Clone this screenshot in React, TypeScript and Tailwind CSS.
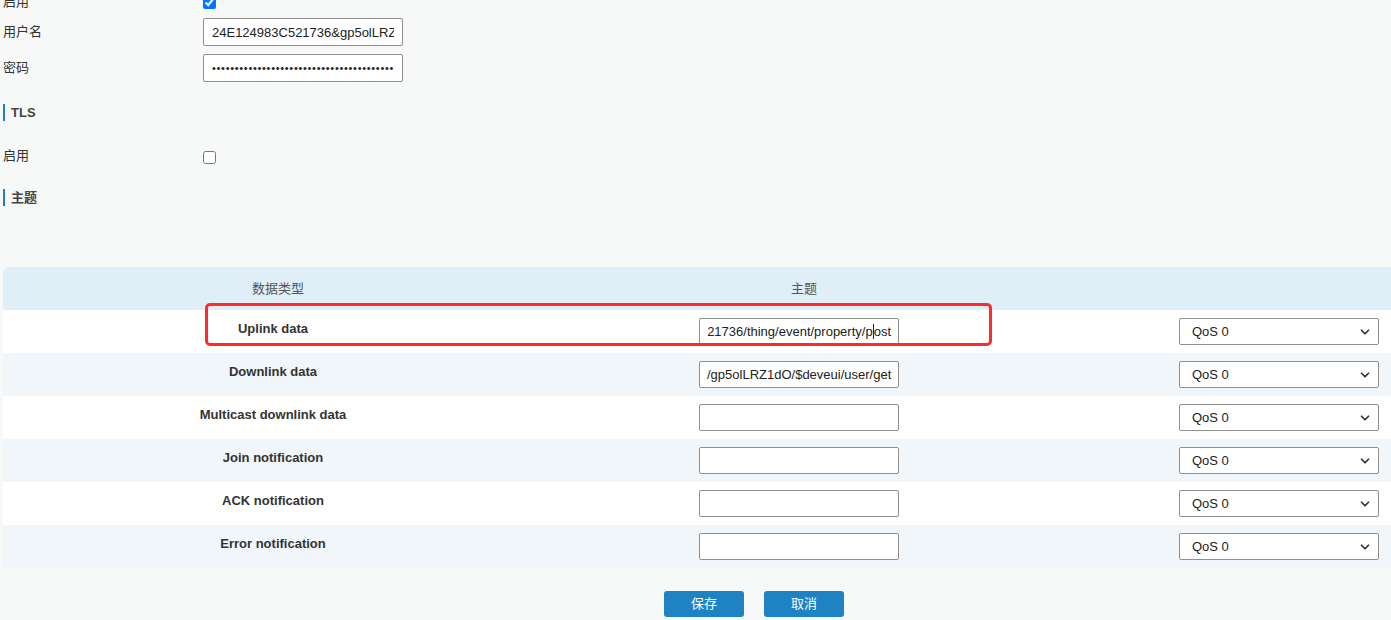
import { ChevronDown } from "lucide-react";

const FONT = "font-['Liberation_Sans','Noto_Sans_CJK_SC',sans-serif]";

interface TopicRow {
  label: string;
  topic: string;
  alignEnd?: boolean;
}

const rows: TopicRow[] = [
  { label: "Uplink data", topic: "21736/thing/event/property/post", alignEnd: true },
  { label: "Downlink data", topic: "/gp5olLRZ1dO/$deveui/user/get" },
  { label: "Multicast downlink data", topic: "" },
  { label: "Join notification", topic: "" },
  { label: "ACK notification", topic: "" },
  { label: "Error notification", topic: "" },
];

function SectionTitle({ text }: { text: string }) {
  return (
    <div className="flex h-[17px] items-center">
      <div className="h-[17px] w-[2px] bg-[#1f7fc0]" />
      <span className="ml-[6px] text-[13px] font-bold text-[#444]">{text}</span>
    </div>
  );
}

function TopicInput({ value, alignEnd }: { value: string; alignEnd?: boolean }) {
  return (
    <div
      className={[
        "flex h-[27px] w-[200px] items-center overflow-hidden whitespace-nowrap rounded-[2px] border border-[#8f8f8f] bg-white px-[7px] text-[13px] text-[#222]",
        alignEnd ? "justify-end" : "justify-start",
      ].join(" ")}
    >
      {alignEnd ? (
        <span className="shrink-0">
          21736/thing/event/property/p<span className="border-l border-[#222]">o</span>st
        </span>
      ) : (
        <span className="shrink-0">{value}</span>
      )}
    </div>
  );
}

function QosSelect() {
  return (
    <div className="flex h-[27px] w-[200px] items-center justify-between rounded-[2px] border border-[#8f8f8f] bg-white pl-[12px] pr-[6px] text-[13px] text-[#222]">
      <span>QoS 0</span>
      <ChevronDown className="h-[14px] w-[14px] text-[#333]" strokeWidth={3} />
    </div>
  );
}

export default function App() {
  return (
    <div className={`h-[620px] w-[1391px] overflow-hidden bg-[#f7f8f8] ${FONT}`}>
      {/* basic auth */}
      <div className="mt-[-12px] flex h-[28px] items-center pl-[3px]">
        <span className="w-[200px] text-[13px] text-[#333]">启用</span>
        <input type="checkbox" checked readOnly className="m-0 h-[13px] w-[13px]" />
      </div>
      <div className="mt-[2px] flex h-[28px] items-center pl-[3px]">
        <span className="w-[200px] text-[13px] text-[#333]">用户名</span>
        <input
          readOnly
          value="24E124983C521736&gp5olLRZ1dO"
          className="h-[28px] w-[200px] rounded-[2px] border border-[#8f8f8f] bg-white px-[8px] text-[13px] text-[#222] outline-none"
        />
      </div>
      <div className="mt-[8px] flex h-[28px] items-center pl-[3px]">
        <span className="w-[200px] text-[13px] text-[#333]">密码</span>
        <input
          readOnly
          type="password"
          value="abcdefghijklmnopqrstuvwxyzabcdefghijklmnopqrst"
          className="h-[28px] w-[200px] rounded-[2px] border border-[#8f8f8f] bg-white px-[8px] text-[11px] tracking-[0.7px] text-[#222] outline-none"
        />
      </div>

      {/* TLS */}
      <div className="mt-[22px] pl-[3px]">
        <SectionTitle text="TLS" />
      </div>
      <div className="mt-[22px] flex h-[28px] items-center pl-[3px]">
        <span className="w-[200px] pb-[3px] text-[13px] text-[#333]">启用</span>
        <input type="checkbox" readOnly className="m-0 h-[13px] w-[13px]" />
      </div>

      {/* topics */}
      <div className="mt-[18px] pl-[3px]">
        <SectionTitle text="主题" />
      </div>

      <div className="relative ml-[3px] mt-[61px] w-[1388px]">
        <div className="flex h-[43px] items-center rounded-tl-[6px] bg-[#e0eef8] text-[13px] text-[#555]">
          <div className="w-[550px] text-center">数据类型</div>
          <div className="w-[502px] text-center">主题</div>
          <div className="flex-1" />
        </div>

        {rows.map((row, i) => (
          <div
            key={row.label}
            className={[
              "flex h-[43px] items-center",
              i % 2 === 0 ? "bg-white" : "bg-[#f1f6fb]",
            ].join(" ")}
          >
            <div className="w-[550px] pb-[6px] pr-[10px] text-center text-[13px] font-bold text-[#333]">
              {row.label}
            </div>
            <div className="w-[502px] pl-[146px]">
              <TopicInput value={row.topic} alignEnd={row.alignEnd} />
            </div>
            <div className="flex flex-1 justify-end pr-[12px]">
              <QosSelect />
            </div>
          </div>
        ))}

        {/* highlight annotation */}
        <div className="pointer-events-none absolute left-[202px] top-[36px] h-[43px] w-[787px] rounded-[5px] border-[3px] border-[#ff2a2a]" />
      </div>

      <div className="mt-[23px] flex justify-center gap-[20px] pl-[117px]">
        <button className="h-[26px] w-[80px] rounded-[3px] bg-[#1e83c2] text-[13px] text-white">保存</button>
        <button className="h-[26px] w-[80px] rounded-[3px] bg-[#1e83c2] text-[13px] text-white">取消</button>
      </div>
    </div>
  );
}
